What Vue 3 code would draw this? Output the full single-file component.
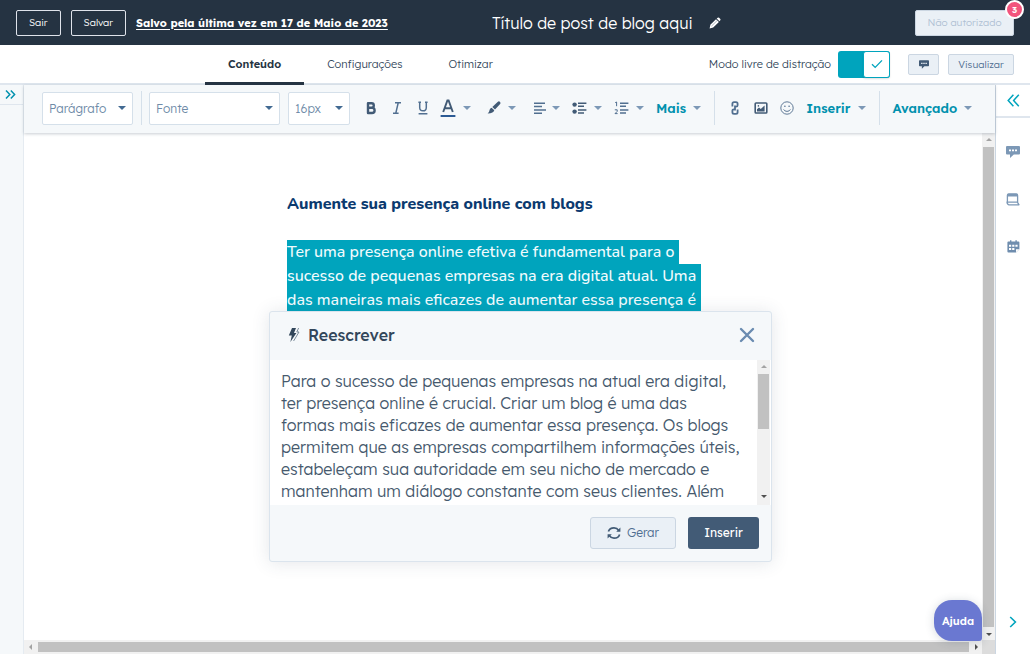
<script setup>
import { ref } from 'vue'

const tabs = ['Conteúdo', 'Configurações', 'Otimizar']
const activeTab = ref('Conteúdo')
const distractionFree = ref(true)

const selectedLines = [
  'Ter uma presença online efetiva é fundamental para o',
  'sucesso de pequenas empresas na era digital atual. Uma',
  'das maneiras mais eficazes de aumentar essa presença é',
]
const rewrittenLines = [
  'Para o sucesso de pequenas empresas na atual era digital,',
  'ter presença online é crucial. Criar um blog é uma das',
  'formas mais eficazes de aumentar essa presença. Os blogs',
  'permitem que as empresas compartilhem informações úteis,',
  'estabeleçam sua autoridade em seu nicho de mercado e',
  'mantenham um diálogo constante com seus clientes. Além',
]
</script>

<template>
  <div class="app">
    <header class="topbar">
      <div class="topbar-left">
        <button class="outline-btn" type="button">Sair</button>
        <button class="outline-btn" type="button">Salvar</button>
        <a class="saved" href="#">Salvo pela última vez em 17 de Maio de 2023</a>
      </div>
      <div class="title-group">
        <h1>Título de post de blog aqui</h1>
        <button class="bare" type="button" aria-label="Editar título">
          <svg width="12" height="12" viewBox="0 0 12 12" fill="#fff">
            <path d="M0.6 11.4 1.4 7.8 7 2.2 9.9 5.1 4.2 10.6Z" />
            <path d="M7.7 1.6 8.7.7Q9.4.1 10.1.7L11.3 1.9Q11.9 2.6 11.3 3.3L10.4 4.3Z" />
            <path d="M2.4 9.2 8 3.7" stroke="#8d97a3" stroke-width=".7" />
          </svg>
        </button>
      </div>
      <div class="publish">
        <button class="soft-btn publish-btn" type="button" disabled>Não autorizado</button>
        <span class="badge">3</span>
      </div>
    </header>

    <div class="tabbar">
      <nav class="tabs">
        <a
          v-for="tab in tabs"
          :key="tab"
          href="#"
          class="tab"
          :class="{ active: tab === activeTab }"
          @click.prevent="activeTab = tab"
        >{{ tab }}</a>
      </nav>
      <div class="tab-actions">
        <label class="switch">
          <span>Modo livre de distração</span>
          <input v-model="distractionFree" type="checkbox" class="hidden-check" />
          <span class="track">
            <span class="thumb">
              <svg width="12" height="10" viewBox="0 0 12 10" fill="none" stroke="#00a4bd" stroke-width="1.3">
                <path d="M1 5.2 4.2 8.4 11 1.4" />
              </svg>
            </span>
          </span>
        </label>
        <button class="soft-btn comment-btn" type="button" aria-label="Comentários">
          <svg width="10" height="9" viewBox="0 0 14 12">
            <path d="M1 0H13Q14 0 14 1V7.4Q14 8.4 13 8.4H7.6L4 12V8.4H1Q0 8.4 0 7.4V1Q0 0 1 0Z" fill="#425b76" />
            <path d="M3 3.4H5V5.2H3ZM6 3.4H8V5.2H6ZM9 3.4H11V5.2H9Z" fill="#eaf0f6" />
          </svg>
        </button>
        <button class="soft-btn view-btn" type="button">Visualizar</button>
      </div>
    </div>

    <div class="workspace">
      <aside class="left-rail">
        <button class="bare expand" type="button" aria-label="Expandir painel">
          <svg width="11" height="9" viewBox="0 0 11 9" fill="none" stroke="#0091ae" stroke-width="1.5">
            <path d="M1 .6 4.8 4.5 1 8.4M5.8.6 9.6 4.5 5.8 8.4" />
          </svg>
        </button>
      </aside>

      <main class="editor">
        <div class="toolbar">
          <div class="select paragraph">
            <select aria-label="Estilo de parágrafo"><option>Parágrafo</option></select>
            <i class="caret dark"></i>
          </div>
          <i class="divider"></i>
          <div class="select font">
            <select aria-label="Fonte"><option>Fonte</option></select>
            <i class="caret dark"></i>
          </div>
          <div class="select size">
            <select aria-label="Tamanho da fonte"><option>16px</option></select>
            <i class="caret dark"></i>
          </div>

          <div class="formats">
            <button class="bare" type="button" aria-label="Negrito">
              <svg width="14" height="14" viewBox="0 0 14 14" fill="none" stroke="#425b76" stroke-width="2.4">
                <path d="M4 2.2H7.6Q9.8 2.2 9.8 4.4T7.6 6.8H4H8Q10.6 6.8 10.6 9.4T8 12H4Z" stroke-linejoin="round" />
              </svg>
            </button>
            <button class="bare" type="button" aria-label="Itálico">
              <svg width="14" height="14" viewBox="0 0 14 14" fill="none" stroke="#516f90" stroke-width="1.5">
                <path d="M5 1.8H11M3 12.2H8.6M8.2 1.8 5.8 12.2" />
              </svg>
            </button>
            <button class="bare" type="button" aria-label="Sublinhado">
              <svg width="14" height="14" viewBox="0 0 14 14" fill="none" stroke="#516f90" stroke-width="1.5">
                <path d="M2.4 1.2H5M9 1.2H11.6M3.7 1.2V6.4Q3.7 9.8 7 9.8T10.3 6.4V1.2M2.6 12.8H11.4" />
              </svg>
            </button>
          </div>

          <div class="tools wide">
            <button class="bare menu" type="button" aria-label="Cor do texto">
              <svg width="16" height="18" viewBox="0 0 16 18" fill="none">
                <path d="M3.2 13 7.4 1.4H8.6L12.8 13M4.8 9.2H11.2" stroke="#425b76" stroke-width="1.9" />
                <path d="M.6 17H15.4" stroke="#2b5a94" stroke-width="2" />
              </svg>
              <i class="caret"></i>
            </button>
            <button class="bare menu" type="button" aria-label="Realce">
              <svg width="14" height="14" viewBox="0 0 14 14" fill="#425b76">
                <path d="M10.6 1Q12-.2 13 .9 14 2 12.9 3.3L8 8.6 5.3 6Z" />
                <path d="M4.6 6.7 7.3 9.3Q6.8 12.4.6 12.5 2.4 11.4 2.5 9.3 2.6 7.2 4.6 6.7Z" />
              </svg>
              <i class="caret"></i>
            </button>
          </div>

          <div class="tools lists">
            <button class="bare menu tight" type="button" aria-label="Alinhamento">
              <svg width="14" height="14" viewBox="0 0 14 14" fill="none" stroke="#516f90" stroke-width="1.5">
                <path d="M1 2.2H12M1 5.6H9M1 9H13M1 12.2H9" />
              </svg>
              <i class="caret"></i>
            </button>
            <button class="bare menu" type="button" aria-label="Lista com marcadores">
              <svg width="15" height="14" viewBox="0 0 15 14" fill="none" stroke="#425b76" stroke-width="1.6">
                <path d="M6 2.2H14.4M6 5.2H12M6 9H14.4M6 12H12" />
                <circle cx="2.6" cy="3.6" r="2.2" fill="#425b76" stroke="none" />
                <circle cx="2.6" cy="10.6" r="2.2" fill="#425b76" stroke="none" />
              </svg>
              <i class="caret"></i>
            </button>
            <button class="bare menu" type="button" aria-label="Lista numerada">
              <svg width="15" height="14" viewBox="0 0 15 14" fill="none" stroke="#516f90" stroke-width="1.6">
                <path d="M6 2.2H14.4M6 5.2H12M6 9H14.4M6 12H12" />
                <path d="M1.2 1.6 2.6 1V5.2M.8 8.8H3.2V10.4L1 12.6H3.6" stroke-width="1" />
              </svg>
              <i class="caret"></i>
            </button>
            <button class="bare menu word" type="button">Mais <i class="caret"></i></button>
          </div>

          <i class="divider"></i>
          <div class="inserts">
            <button class="bare" type="button" aria-label="Link">
              <svg width="14" height="14" viewBox="0 0 14 14" fill="none" stroke="#516f90" stroke-width="1.8">
                <path d="M4.4 5.6V2.8Q4.4 1.2 6 1.2H8Q9.6 1.2 9.6 2.8V4.2Q9.6 5.6 8 5.6H7M9.6 8.4V11.2Q9.6 12.8 8 12.8H6Q4.4 12.8 4.4 11.2V9.8Q4.4 8.4 6 8.4H7M7 4.4V9.6" />
              </svg>
            </button>
            <button class="bare" type="button" aria-label="Imagem">
              <svg width="14" height="14" viewBox="0 0 14 14">
                <rect x="1.2" y="2" width="11.6" height="10" rx=".8" fill="none" stroke="#425b76" stroke-width="1.6" />
                <path d="M3 10.4V8.2L5 6.6 6.8 8 10.6 4.4V10.4Z" fill="#425b76" />
                <circle cx="4.4" cy="4.9" r=".8" fill="#425b76" />
              </svg>
            </button>
            <button class="bare" type="button" aria-label="Emoji">
              <svg width="14" height="14" viewBox="0 0 14 14" fill="none" stroke="#607a97" stroke-width="1">
                <circle cx="7" cy="7" r="6.2" />
                <path d="M3.6 8.4Q4.6 10.4 7 10.4T10.4 8.4" />
                <circle cx="4.9" cy="5.2" r=".8" fill="#516f90" stroke="none" />
                <circle cx="9.1" cy="5.2" r=".8" fill="#516f90" stroke="none" />
              </svg>
            </button>
          </div>
          <button class="bare menu word insert" type="button">Inserir <i class="caret"></i></button>
          <i class="divider"></i>
          <button class="bare menu word advanced" type="button">Avançado <i class="caret"></i></button>
        </div>

        <div class="canvas">
          <div class="page">
            <article class="post">
              <h2>Aumente sua presença online com blogs</h2>
              <p>
                <span v-for="line in selectedLines" :key="line" class="selected">{{ line }}</span>
              </p>

              <section class="dialog" role="dialog" aria-labelledby="rewrite-title">
                <header>
                  <svg width="12" height="16" viewBox="0 0 12 16">
                    <path d="M4 1H8L6 6H8.4L2.4 15 3.8 8.6H.8Z" fill="#33475b" />
                    <path d="M10.6 1 8.8 5H11L5.6 14" fill="none" stroke="#6f8192" stroke-width=".9" />
                  </svg>
                  <h3 id="rewrite-title">Reescrever</h3>
                  <button class="bare" type="button" aria-label="Fechar">
                    <svg width="16" height="16" viewBox="0 0 16 16" stroke="#6a8bb0" stroke-width="2.4" stroke-linecap="round">
                      <path d="M2 2 14 14M14 2 2 14" />
                    </svg>
                  </button>
                </header>
                <div class="dialog-body">
                  <div class="rewritten">
                    <span v-for="line in rewrittenLines" :key="line">{{ line }}</span>
                  </div>
                  <div class="vbar small" aria-hidden="true">
                    <i class="arrow up"></i>
                    <i class="thumb-v"></i>
                    <i class="arrow down"></i>
                  </div>
                </div>
                <footer>
                  <button class="soft-btn generate" type="button">
                    <svg width="14" height="14" viewBox="0 0 14 14" fill="none" stroke="#425b76" stroke-width="1.7">
                      <path d="M1.4 5.6Q2.6 1.8 7 1.8 10 1.8 11.8 4.4M12.6 8.4Q11.4 12.2 7 12.2 4 12.2 2.2 9.6" />
                      <path d="M13.4 1.6V5.8H9.2ZM.6 12.4V8.2H4.8Z" fill="#425b76" stroke="none" />
                    </svg>
                    Gerar
                  </button>
                  <button class="primary" type="button">Inserir</button>
                </footer>
              </section>
            </article>
            <button class="help" type="button">Ajuda</button>
          </div>
          <div class="vbar" aria-hidden="true">
            <i class="arrow up"></i>
            <i class="thumb-v"></i>
            <i class="arrow down"></i>
          </div>
          <div class="hbar" aria-hidden="true">
            <i class="arrow left"></i>
            <i class="thumb-h"></i>
            <i class="arrow right"></i>
          </div>
          <div class="corner"></div>
        </div>
      </main>

      <aside class="right-rail">
        <button class="bare collapse" type="button" aria-label="Recolher painel">
          <svg width="13" height="13" viewBox="0 0 13 13" fill="none" stroke="#00a4bd" stroke-width="1.5">
            <path d="M6.4.8 1.2 6.5 6.4 12.2M11.8.8 6.6 6.5 11.8 12.2" />
          </svg>
        </button>
        <div class="rail-icons">
          <button class="bare" type="button" aria-label="Comentários">
            <svg width="14" height="12" viewBox="0 0 14 12">
              <path d="M1 0H13Q14 0 14 1V7.6Q14 8.6 13 8.6H7.8L4 12V8.6H1Q0 8.6 0 7.6V1Q0 0 1 0Z" fill="#7c98b6" />
              <path d="M3 3.4H5V5.2H3ZM6 3.4H8V5.2H6ZM9 3.4H11V5.2H9Z" fill="#fff" />
            </svg>
          </button>
          <button class="bare" type="button" aria-label="Conteúdo salvo">
            <svg width="14" height="13" viewBox="0 0 14 13" fill="none" stroke="#7c98b6" stroke-width="1.3">
              <path d="M1.4 9V2.4Q1.4 1 2.8 1H10.2Q11.6 1 11.6 2.4V9" />
              <path d="M1.4 2.2H11.6" stroke-width="2.6" />
              <path d="M1 9.2H11.4L13 11.8H3Q1.4 11.8 1 9.2Z" stroke-linejoin="round" />
            </svg>
          </button>
          <button class="bare" type="button" aria-label="Calendário">
            <svg width="13" height="13" viewBox="0 0 13 13">
              <path d="M1.4 1.6H3V.2H4.4V1.6H8.4V.2H9.8V1.6H11.4Q12.4 1.6 12.4 2.6V9.2L9 12.6H1.4Q.4 12.6.4 11.6V2.6Q.4 1.6 1.4 1.6Z" fill="#6f8dae" />
              <path d="M2 4.8H4.2V6.8H2ZM5.2 4.8H7.4V6.8H5.2ZM8.4 4.8H10.6V6.8H8.4ZM2 8H4.2V10H2ZM5.2 8H7.4V10H5.2ZM9 12.6V9.2H12.4Z" fill="#fff" />
            </svg>
          </button>
        </div>
        <button class="bare next" type="button" aria-label="Avançar">
          <svg width="8" height="12" viewBox="0 0 8 12" fill="none" stroke="#00a4bd" stroke-width="1.6">
            <path d="M1.2 1 6.4 6 1.2 11" />
          </svg>
        </button>
      </aside>
    </div>
  </div>
</template>

<style>
body {
  background: #fff;
}
</style>

<style scoped>
* {
  box-sizing: border-box;
}
.app {
  display: flex;
  flex-direction: column;
  height: 100vh;
  overflow: hidden;
  font-family: Lexend, "Lexend Deca", Inter, "Liberation Sans", sans-serif;
  font-size: 11px;
  font-weight: 300;
  color: #33475b;
}
button,
select {
  font: inherit;
  color: inherit;
}
button {
  cursor: pointer;
}
h1,
h2,
h3,
p {
  margin: 0;
}
svg {
  display: block;
  flex: none;
}
.bare {
  display: flex;
  align-items: center;
  justify-content: center;
  padding: 0;
  border: 0;
  background: none;
}

/* Top bar */
.topbar {
  display: grid;
  grid-template-columns: 476px 1fr auto;
  align-items: center;
  flex: none;
  height: 45px;
  padding: 0 16px;
  background: #253342;
  color: #fff;
}
.topbar-left {
  display: flex;
  align-items: center;
  gap: 10px;
}
.outline-btn {
  height: 26px;
  padding: 0 12px;
  border: 1px solid #dfe3eb;
  border-radius: 2px;
  background: transparent;
  font-size: 10px;
}
.saved {
  color: #fff;
  font-weight: 700;
  white-space: nowrap;
  text-underline-offset: 2px;
}
.title-group {
  display: flex;
  align-items: center;
  gap: 16px;
}
h1 {
  font-size: 16px;
  font-weight: 300;
  white-space: nowrap;
}
.publish {
  position: relative;
}
.soft-btn {
  display: flex;
  align-items: center;
  justify-content: center;
  border: 1px solid #cbd6e2;
  border-radius: 2px;
  background: #eaf0f6;
  color: #506e91;
  padding: 0;
  font-size: 10px;
}
.publish-btn {
  width: 99px;
  height: 26px;
  color: #b0c1d4;
}
.badge {
  position: absolute;
  top: -10px;
  right: -10px;
  display: grid;
  place-items: center;
  width: 19px;
  height: 19px;
  border: 2px solid #fff;
  border-radius: 50%;
  background: #f2547d;
  font-size: 9px;
  font-weight: 600;
}

/* Tab bar */
.tabbar {
  display: flex;
  justify-content: space-between;
  flex: none;
  height: 40px;
  padding: 0 16px 0 205px;
  border-bottom: 2px solid #dfe6ee;
}
.tabs {
  display: flex;
}
.tab {
  display: flex;
  align-items: center;
  height: 40px;
  padding: 0 23px;
  border-bottom: 3px solid transparent;
  color: #33475b;
  text-decoration: none;
}
.tab.active {
  border-color: #253342;
  border-radius: 2px 2px 0 0;
  color: #253342;
  font-weight: 600;
}
.tab-actions {
  display: flex;
  align-items: center;
  gap: 9px;
}
.switch {
  display: flex;
  align-items: center;
  gap: 7px;
  margin-right: 9px;
}
.hidden-check {
  position: absolute;
  opacity: 0;
  width: 1px;
  height: 1px;
  margin: 0;
}
.track {
  display: flex;
  justify-content: flex-end;
  width: 52px;
  height: 27px;
  border-radius: 3px;
  background: #00a4bd;
}
.thumb {
  display: grid;
  place-items: center;
  width: 27px;
  border: 1px solid #00a4bd;
  border-radius: 3px;
  background: #fff;
  box-shadow: 0 1px 2px #00000022;
}
.comment-btn {
  width: 31px;
  height: 21px;
}
.view-btn {
  width: 66px;
  height: 21px;
}

/* Workspace */
.workspace {
  display: grid;
  grid-template-columns: 24px 1fr 35px;
  flex: 1;
  min-height: 0;
}
.left-rail {
  border-right: 1px solid #e5ebf1;
  background: #f5f8fa;
}
.expand {
  width: 100%;
  height: 20px;
  padding-right: 2px;
  border-bottom: 1px solid #dfe6ee;
}
.editor {
  display: flex;
  flex-direction: column;
  min-width: 0;
}
.toolbar {
  position: relative;
  display: flex;
  align-items: center;
  flex: none;
  height: 48px;
  padding: 0 0 2px 18px;
  background: #f5f8fa;
  box-shadow: 0 1px 3px #33475b44;
}
.select {
  display: grid;
  align-items: center;
}
.select > * {
  grid-area: 1 / 1;
}
.select select {
  width: 100%;
  height: 33px;
  padding: 0 6px;
  border: 1px solid #d5e0ea;
  border-radius: 2px;
  background: #fff;
  color: #6f8ba8;
  font-size: 12px;
  appearance: none;
}
.select .caret {
  justify-self: end;
  margin-right: 7px;
  pointer-events: none;
}
.paragraph {
  width: 91px;
}
.font {
  width: 131px;
}
.size {
  width: 62px;
  margin-left: 8px;
}
.caret {
  width: 0;
  height: 0;
  border: 4px solid transparent;
  border-top-color: #7c98b6;
  border-bottom-width: 0;
}
.caret.dark {
  border-top-color: #426a92;
}
.divider {
  width: 1px;
  height: 34px;
  margin: 0 8px;
  background: #d5e0ea;
}
.paragraph + .divider {
  margin-right: 7px;
}
.formats {
  margin-left: 8px;
}
.formats,
.inserts {
  display: flex;
}
.formats button,
.inserts button {
  width: 26px;
  height: 26px;
}
.tools {
  display: flex;
}
.wide {
  gap: 16px;
  margin-left: 4px;
}
.lists {
  gap: 12px;
  margin-left: 17px;
}
.menu {
  gap: 7px;
  height: 26px;
}
.menu.tight {
  gap: 5px;
}
.word {
  color: #0091ae;
  font-size: 13px;
  font-weight: 600;
}
.lists + .divider {
  margin-left: 13px;
  margin-right: 7px;
}
.insert {
  margin: 0 5px 0 6px;
}
.advanced {
  margin-left: 5px;
}
.canvas {
  display: grid;
  grid-template-columns: 1fr 13px;
  grid-template-rows: 1fr 14px;
  flex: 1;
  min-height: 0;
}
.page {
  position: relative;
}
.post {
  position: relative;
  width: 432px;
  margin: 0 auto;
  padding-top: 59px;
  font-family: Nunito, "Noto Sans", sans-serif;
  font-size: 16px;
  font-weight: 400;
  line-height: 24px;
}
h2 {
  color: #0b3a6f;
  font-size: 16px;
  font-weight: 800;
  white-space: nowrap;
}
.post p {
  margin-top: 24px;
}
.selected {
  display: block;
  width: fit-content;
  padding-right: 5px;
  background: #00a4bd;
  color: #f2fbfd;
  font-weight: 500;
  white-space: nowrap;
}

/* Rewrite dialog */
.dialog {
  position: absolute;
  top: 178px;
  left: -18px;
  width: 503px;
  border: 1px solid #dbe4ed;
  border-radius: 3px;
  background: #f5f8fa;
  box-shadow: 0 1px 18px #33475b22;
  font-family: Lexend, "Lexend Deca", Inter, "Liberation Sans", sans-serif;
  font-weight: 300;
}
.dialog header {
  display: flex;
  align-items: center;
  gap: 8px;
  height: 48px;
  padding: 0 16px 2px 18px;
}
.dialog header .bare {
  margin-left: auto;
}
h3 {
  color: #33475b;
  font-size: 16px;
  font-weight: 500;
}
.dialog-body {
  display: flex;
  justify-content: space-between;
  height: 145px;
  background: #fff;
}
.rewritten {
  padding: 10px 0 0 11px;
  color: #46596d;
  font-size: 16px;
  line-height: 22px;
}
.rewritten span {
  display: block;
  white-space: nowrap;
}
.dialog footer {
  display: flex;
  justify-content: flex-end;
  gap: 12px;
  padding: 12px;
}
.dialog footer button {
  height: 32px;
  border-radius: 3px;
  font-size: 12px;
}
.generate {
  gap: 6px;
  width: 86px;
}
.primary {
  width: 71px;
  border: 0;
  background: #425b76;
  color: #fff;
  font-weight: 400;
}

/* Scroll bars */
.vbar {
  display: flex;
  flex-direction: column;
  align-items: center;
  gap: 6px;
  padding: 5px 0 4px;
  background: #f1f1f1;
}
.vbar.small {
  width: 13px;
  margin-right: 1px;
  padding-bottom: 7px;
}
.thumb-v {
  flex: 1;
  width: 11px;
  background: #c1c1c1;
}
.small .thumb-v {
  flex: none;
  height: 55px;
}
.small .down {
  margin-top: auto;
}
.hbar {
  display: flex;
  align-items: center;
  gap: 6px;
  padding: 0 4px 0 5px;
  background: #f1f1f1;
}
.thumb-h {
  flex: 1;
  height: 10px;
  background: #c1c1c1;
}
.corner {
  background: #dcdcdc;
}
.arrow {
  width: 0;
  height: 0;
  border: 3px solid transparent;
}
.up {
  border-top-width: 0;
  border-bottom-color: #a3a3a3;
}
.down {
  border-bottom-width: 0;
  border-top-color: #505050;
}
.left {
  border-left-width: 0;
  border-right-color: #a3a3a3;
}
.right {
  border-right-width: 0;
  border-left-color: #505050;
}
.help {
  position: absolute;
  right: 0;
  bottom: -1px;
  width: 48px;
  height: 41px;
  padding: 0;
  border: 0;
  border-radius: 18px 18px 3px 18px;
  background: #6a78d1;
  box-shadow: 0 1px 10px #33475b33;
  color: #fff;
  font-size: 11px;
  font-weight: 600;
}

/* Right rail */
.right-rail {
  display: flex;
  flex-direction: column;
  border-left: 1px solid #cbd6e2;
  background: #fff;
}
.collapse {
  height: 33px;
  border-bottom: 2px solid #dfe6ee;
}
.rail-icons {
  display: grid;
  gap: 23px;
  margin-top: 22px;
}
.rail-icons button {
  height: 24px;
}
.next {
  height: 24px;
  margin-top: auto;
  margin-bottom: 20px;
}
</style>
